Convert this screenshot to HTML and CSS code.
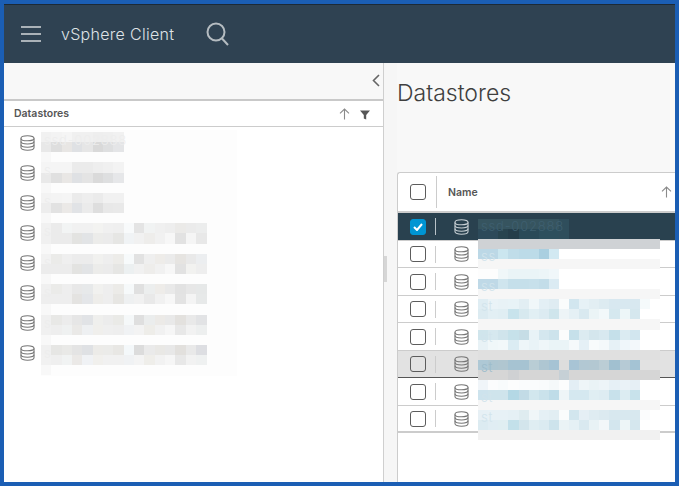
FILE: index.html
```html
<!DOCTYPE html>
<html lang="en">
<head>
  <meta charset="UTF-8" />
  <title>vSphere Client - Datastores</title>
  <link rel="stylesheet" href="styles.css">
</head>
<body>
  <svg class="defs" width="0" height="0">
    <symbol id="db" viewBox="0 0 15 16">
      <path d="M1 3.2C1 1.8 3.8.8 7.5.8S14 1.8 14 3.2v9.6c0 1.4-2.8 2.4-6.5 2.4S1 14.2 1 12.8z" />
      <path d="M1 3.4c0 1.4 2.8 2.4 6.5 2.4S14 4.8 14 3.4" />
      <path d="M1 6.6C1 8 3.8 9 7.5 9S14 8 14 6.6" />
      <path d="M1 9.8c0 1.4 2.8 2.4 6.5 2.4s6.5-1 6.5-2.4" />
    </symbol>
    <symbol id="up" viewBox="0 0 11 12">
      <path d="M5.5 11.5V1M1 5.3 5.5 1 10 5.3" />
    </symbol>
  </svg>

  <div class="app">
    <header class="topbar">
      <span class="burger"><i></i><i></i><i></i></span>
      <span class="brand">vSphere Client</span>
      <svg class="search" width="24" height="25" viewBox="0 0 24 25">
        <circle cx="10" cy="10" r="8.5" />
        <path d="M16 16.5 22 23" />
      </svg>
    </header>

    <div class="workspace">
      <aside class="tree-panel">
        <div class="tree-toolbar">
          <svg class="collapse" width="8" height="13" viewBox="0 0 8 13"><path d="M7 1 1.5 6.5 7 12" /></svg>
        </div>
        <div class="tree-head">
          <span class="head-label">Datastores</span>
          <svg class="sort-icon tree-sort"><use href="#up" /></svg>
          <svg class="filter" width="10" height="10" viewBox="0 0 10 10"><path d="M0 .5h10L6.2 5v4.5l-2.4-1V5z" /></svg>
        </div>
        <ul class="tree-list">
          <li><svg class="db"><use href="#db" /></svg></li>
          <li><svg class="db"><use href="#db" /></svg></li>
          <li><svg class="db"><use href="#db" /></svg></li>
          <li><svg class="db"><use href="#db" /></svg></li>
          <li><svg class="db"><use href="#db" /></svg></li>
          <li><svg class="db"><use href="#db" /></svg></li>
          <li><svg class="db"><use href="#db" /></svg></li>
          <li><svg class="db"><use href="#db" /></svg></li>
        </ul>
        <!-- blurred datastore names -->
        <div class="mosaic tree-mosaic">
          <div class="l1a">ssd-002888</div><div class="l1b"></div><div class="lgap"></div>
          <div class="l2a">s</div><div class="l2b"></div><div class="lgap"></div>
          <div class="l3a">s</div><div class="l3b"></div><div class="lgap"></div>
          <div class="l4a">s</div><div class="l4b"></div><div class="lgap"></div>
          <div class="l5a">s</div><div class="l5b"></div><div class="lgap"></div>
          <div class="l6a">s</div><div class="l6b"></div><div class="lgap"></div>
          <div class="l7a">s</div><div class="l7b"></div><div class="lgap"></div>
          <div class="l8a">s</div><div class="l8b"></div><div class="lgap"></div>
        </div>
      </aside>

      <div class="splitter"><span class="grip"></span></div>

      <main class="content">
        <h1>Datastores</h1>
        <section class="grid">
          <div class="grid-head">
            <span class="check-cell"><span class="check"></span></span>
            <span class="head-label name-label">Name</span>
            <svg class="sort-icon grid-sort"><use href="#up" /></svg>
          </div>
          <div class="row selected">
            <span class="check on"><svg width="10" height="8" viewBox="0 0 10 8"><path d="M1 4l3 3 5-6" /></svg></span>
            <span class="sep"></span>
            <svg class="db"><use href="#db" /></svg>
          </div>
          <div class="row"><span class="check"></span><span class="sep"></span><svg class="db"><use href="#db" /></svg></div>
          <div class="row"><span class="check"></span><span class="sep"></span><svg class="db"><use href="#db" /></svg></div>
          <div class="row"><span class="check"></span><span class="sep"></span><svg class="db"><use href="#db" /></svg></div>
          <div class="row"><span class="check"></span><span class="sep"></span><svg class="db"><use href="#db" /></svg></div>
          <div class="row hovered"><span class="check"></span><span class="sep"></span><svg class="db"><use href="#db" /></svg></div>
          <div class="row"><span class="check"></span><span class="sep"></span><svg class="db"><use href="#db" /></svg></div>
          <div class="row last"><span class="check"></span><span class="sep"></span><svg class="db"><use href="#db" /></svg></div>

          <!-- blurred datastore names -->
          <div class="mosaic grid-mosaic">
            <div class="r0 ghost-dark">ssd-002888</div><div class="r1"></div><div class="rbar"></div>
            <div class="r3">ss</div><div class="rpale"></div>
            <div class="r5"></div><div class="r6">ss</div><div class="rpale"></div>
            <div class="r8">st</div><div class="r9"></div><div class="rpale"></div>
            <div class="r11">st</div><div class="r12"></div><div class="rhov"></div>
            <div class="r14 ghost-hover">st</div><div class="r15"></div>
            <div class="r16"></div><div class="r17">st</div><div class="rpale"></div>
            <div class="r19">st</div><div class="r20"></div><div class="rend"></div>
          </div>
        </section>
      </main>
    </div>
  </div>
</body>
</html>
```

FILE: styles.css
```css
* {
  box-sizing: border-box;
  margin: 0;
  padding: 0;
}

body {
  height: 486px;
  overflow: hidden;
  background: #1b5eb4;
  padding: 4px;
  font-family: 'Inter', 'Liberation Sans', sans-serif;
}

.defs {
  position: absolute;
}

.app {
  height: 478px;
  display: flex;
  flex-direction: column;
  background: #f8f8f8;
}

/* top bar */
.topbar {
  height: 59px;
  flex: none;
  display: flex;
  align-items: center;
  background: #2f4252;
  border-top: 1px solid #1d2a36;
  padding-left: 17px;
}

.burger {
  width: 20px;
  display: flex;
  flex-direction: column;
  gap: 5px;
}

.burger i {
  height: 2px;
  background: #aab2b8;
}

.brand {
  margin-left: 20px;
  color: #dfe3e6;
  font-size: 16px;
  font-weight: 300;
  letter-spacing: 0.3px;
}

.search {
  margin-left: 32px;
  fill: none;
  stroke: #b5bcc1;
  stroke-width: 2;
}

/* layout */
.workspace {
  flex: 1;
  display: flex;
  min-height: 0;
}

.tree-panel {
  position: relative;
  width: 380px;
  flex: none;
  display: flex;
  flex-direction: column;
  background: #fff;
  border-right: 1px solid #cfcfcf;
}

.tree-toolbar {
  height: 38px;
  flex: none;
  display: flex;
  align-items: center;
  justify-content: flex-end;
  padding: 0 3px 1px 0;
  background: #f8f8f8;
  border-bottom: 2px solid #c9c9c9;
}

.collapse {
  fill: none;
  stroke: #666;
  stroke-width: 1.6;
}

.tree-head {
  height: 26px;
  flex: none;
  display: flex;
  align-items: center;
  padding-left: 10px;
  border-bottom: 1px solid #cccccc;
}

.head-label {
  font-size: 10.5px;
  font-weight: 600;
  color: #565656;
}

.sort-icon {
  width: 11px;
  height: 12px;
  fill: none;
  stroke: #8a8a8a;
  stroke-width: 1.1;
}

.tree-sort {
  margin-left: auto;
}

.filter {
  margin: 2px 13px 0 10px;
  fill: #565656;
}

.tree-list {
  list-style: none;
  padding-top: 1px;
}

.tree-list li {
  height: 30px;
  display: flex;
  align-items: center;
  padding-left: 16px;
}

.db {
  width: 15px;
  height: 16px;
  flex: none;
  fill: none;
  stroke: #777;
  stroke-width: 1.1;
}

.splitter {
  width: 13px;
  flex: none;
  display: flex;
  align-items: center;
  background: #f6f6f6;
  padding-bottom: 8px;
}

.grip {
  width: 3px;
  height: 26px;
  background: #d6d6d6;
}

/* datastores page */
.content {
  flex: 1;
  min-width: 0;
  display: flex;
  flex-direction: column;
  background: #f8f8f8;
}

h1 {
  height: 109px;
  flex: none;
  padding-top: 15px;
  font-size: 23px;
  font-weight: 300;
  line-height: 30px;
  color: #3f3f3f;
}

.grid {
  position: relative;
  flex: 1;
  background: #fff;
  border: 1px solid #cccccc;
  border-width: 1px 0 0 1px;
  border-top-left-radius: 3px;
}

.grid-head {
  height: 40px;
  display: flex;
  align-items: center;
  border-bottom: 2px solid #cccccc;
}

.check-cell {
  width: 39px;
  height: 32px;
  flex: none;
  display: flex;
  align-items: center;
  padding-left: 12px;
  border-right: 1px solid #cccccc;
}

.check {
  width: 16px;
  height: 16px;
  flex: none;
  display: flex;
  align-items: center;
  justify-content: center;
  background: #fff;
  border: 1.5px solid #5c5c5c;
  border-radius: 3px;
}

.check.on {
  background: #0095d3;
  border-color: #0095d3;
}

.check svg {
  fill: none;
  stroke: #fff;
  stroke-width: 2;
}

.name-label {
  margin-left: 11px;
}

.grid-sort {
  margin-left: auto;
  margin-right: 3px;
}

.row {
  height: 27.5px;
  display: flex;
  align-items: center;
  padding: 1px 0 0 12px;
  border-bottom: 1px solid #cccccc;
}

.row.selected {
  background: #29414f;
}

.row.selected .db {
  stroke: #c8d0d5;
}

.row.selected .sep {
  background: #b8c2c8;
}

.row.hovered {
  background: #e2e2e2;
  border-bottom-color: #565656;
}

.row.hovered .check {
  background: transparent;
}

.row.last {
  border-bottom: 2px solid #cccccc;
}

.sep {
  width: 1px;
  height: 17px;
  margin: 0 18px 0 9px;
  background: #cccccc;
}

/* mosaic over the names */
.mosaic {
  position: absolute;
  font-size: 13px;
  font-weight: 300;
  letter-spacing: 0.8px;
}

.mosaic div {
  overflow: visible;
  padding-left: 3px;
}

.tree-mosaic {
  left: 37px;
  top: 67px;
  width: 196px;
  height: 246px;
  padding-top: 2px;
  background: #fdfdfd;
  color: #ededed;
}

.tree-mosaic div {
  height: 10.15px;
  line-height: 17px;
  background-repeat: no-repeat;
}

.lgap { background: linear-gradient(90deg, #f8f8f8 10px, transparent 0); }
.l1a { background-image: linear-gradient(90deg, #f1f1f1 10px, #f3f3f3 0 21px, #f5f5f5 0 31px, #f0f0f0 0 52px, #eeeeee 0 62px, #efefef 0 72px, #f1f1f1 0 83px, transparent 0); }
.l1b { background-image: linear-gradient(90deg, #e8e8e8 10px, #dedede 0 21px, #e8e6e4 0 31px, #dfe1e4 0 41px, #e6e6e6 0 52px, #d9d9d9 0 62px, #dedfe0 0 72px, #e4e5e7 0 83px, transparent 0); }
.l2a { background-image: linear-gradient(90deg, #f5f5f5 31px, #ebebeb 0 52px, #eeeeee 0 62px, #f0f0f0 0 72px, #f3f3f3 0 83px, transparent 0); }
.l2b { background-image: linear-gradient(90deg, #e9e9e9 10px, #e0e0e0 0 21px, #e9e7e5 0 31px, #dfe1e4 0 41px, #e4e4e4 0 52px, #dadada 0 62px, #dedfe0 0 72px, #e6e7e9 0 83px, transparent 0); }
.l3a { background-image: linear-gradient(90deg, #f3f3f3 10px, #f4f4f4 0 21px, #f5f5f5 0 31px, #ebebeb 0 41px, #eeeeee 0 52px, #ebebeb 0 62px, #f1f1f1 0 83px, transparent 0); }
.l3b { background-image: linear-gradient(90deg, #ededed 10px, #e2e2e2 0 21px, #ebe9e7 0 31px, #e1e3e6 0 41px, #ebebeb 0 52px, #dedede 0 62px, #e8e8e8 0 72px, #e9e9e9 0 83px, transparent 0); }
.l4a { background-image: linear-gradient(90deg, #f1f1f1 10px, #ebebeb 0 21px, #f2f4f4 0 31px, #f1f1f1 0 52px, #f3f3f1 0 62px, #f0f0f0 0 72px, #efefef 0 83px, #f8fafb 0 93px, #e4e4e4 0 103px, #f1f3f3 0 114px, #f0f0f0 0 124px, #eeeeee 0 134px, #ebeae8 0 145px, #ebebeb 0 155px, #eceded 0 166px, transparent 0); }
.l4b { background-image: linear-gradient(90deg, #f0f0f0 10px, #ebebeb 0 31px, #e3e3e1 0 41px, #e2e4e6 0 52px, #ececea 0 62px, #ebebeb 0 72px, #e6e6e4 0 83px, #f0f3f5 0 93px, #f1f1f1 0 103px, #eeedeb 0 114px, #f1f1f1 0 124px, #f7f7f7 0 134px, #e2e2e2 0 145px, #f5f5f5 0 155px, #e8e8e8 0 166px, transparent 0); }
.l5a { background-image: linear-gradient(90deg, #f2f2f2 10px, #ebebe9 0 21px, #efefef 0 31px, #ececec 0 52px, #f1f1ef 0 62px, #eeeeee 0 72px, #edece9 0 83px, #f7fafb 0 93px, #e2e2e2 0 103px, #efefef 0 114px, #eeece9 0 124px, #ebebeb 0 134px, #e6e4e1 0 145px, #e9e9e9 0 155px, #eceef0 0 166px, transparent 0); }
.l5b { background-image: linear-gradient(90deg, #ececec 31px, #e3e3e1 0 41px, #e2e4e6 0 52px, #ececea 0 62px, #ebebeb 0 72px, #e6e6e4 0 83px, #ecf0f1 0 93px, #f1f1f1 0 103px, #eeedeb 0 114px, #f1f1f1 0 124px, #f7f7f7 0 134px, #e2e2e2 0 145px, #f2f2f0 0 155px, #eeeeee 0 166px, transparent 0); }
.l6a { background-image: linear-gradient(90deg, #f0f0f0 10px, #ebebe9 0 21px, #eeeeee 0 31px, #e8e8e8 0 41px, #e7e9ea 0 52px, #f1f1ef 0 62px, #eeeeee 0 72px, #ecebe8 0 83px, #f6f9fa 0 93px, #e0e0e0 0 103px, #eceeee 0 114px, #eeece9 0 124px, #e9e9e9 0 134px, #e2e2e2 0 145px, #e7e7e7 0 155px, #e6e8e8 0 166px, transparent 0); }
.l6b { background-image: linear-gradient(90deg, #eeeeee 31px, #e4e3e1 0 41px, #e4e6e9 0 52px, #eeedea 0 62px, #eeeeee 0 72px, #e7e6e3 0 83px, #eef0f1 0 93px, #f1f1f1 0 103px, #e9e9e9 0 114px, #f1f1f1 0 124px, #f7f7f7 0 134px, #e3e3e3 0 145px, #f4f4f4 0 155px, #e7e9e9 0 166px, transparent 0); }
.l7a { background-image: linear-gradient(90deg, #f0f0f0 10px, #e8e8e6 0 21px, #ececec 0 31px, #e6e6e6 0 41px, #e1e3e6 0 52px, #efefed 0 62px, #ececec 0 72px, #eaeae7 0 83px, #f5f8f9 0 93px, #dfdfdf 0 103px, #ebeded 0 114px, #eceae7 0 124px, #e9e9e9 0 134px, #e3e1de 0 145px, #e9e9e9 0 155px, #e2e3e5 0 166px, transparent 0); }
.l7b { background-image: linear-gradient(90deg, #f0f0f0 10px, #eeeeee 0 21px, #eff1f1 0 31px, #eae9e7 0 41px, #eef0f2 0 52px, #f0efec 0 62px, #efefef 0 72px, #eeeeee 0 83px, #f0f2f4 0 93px, #f3f3f3 0 103px, #eeede9 0 114px, #f1f1f1 0 124px, #f6f6f6 0 134px, #e8e8e8 0 145px, #f2f2f2 0 155px, #edefef 0 166px, transparent 0); }
.l8a { background-image: linear-gradient(90deg, #f0f0f0 10px, #e6e6e4 0 21px, #e9e9e7 0 31px, #e4e4e4 0 41px, #dfe1e4 0 52px, #ecebe8 0 62px, #ebebe9 0 72px, #e8e7e4 0 83px, #f4f8fa 0 93px, #dcdcdc 0 103px, #eaeaea 0 114px, #e9e8e5 0 124px, #e8e8e8 0 134px, #e2e0dd 0 145px, #e9e9e9 0 155px, #dddee2 0 166px, transparent 0); }
.l8b { background-image: linear-gradient(90deg, #f1f1f1 10px, #efefef 0 21px, #f1f3f3 0 31px, #ebe9e7 0 41px, #f0f2f5 0 52px, #f1f0ed 0 62px, #f1f1f1 0 83px, #f0f2f4 0 93px, #f4f4f4 0 103px, #efeeea 0 114px, #f2f2f2 0 124px, #f6f6f6 0 134px, #e8e8e8 0 145px, #f2f2f2 0 155px, #eff1f1 0 166px, transparent 0); }

.grid-mosaic {
  left: 80px;
  top: 46px;
  width: 182px;
  color: #d2e4ec;
}

.grid-mosaic div {
  height: 10.05px;
  line-height: 15px;
}

.grid-mosaic .ghost-dark { color: #3e5f6f; }
.grid-mosaic .ghost-hover { color: #9dbccb; }
.rbar { background: #cfd2d5; }
.rpale { background: #f6f6f6; }
.rhov { background: #e0e0e0; }
.rend { background: #f1f1f1; }
.r0 { background: linear-gradient(90deg, #36545f 81px, #2f4e5c 0 91px, transparent 0); }
.r1 { background: linear-gradient(90deg, #2d4a5a 20px, #28444f 0 30px, #253e4a 0 41px, #2a4a58 0 61px, #2d4f5d 0 81px, #2f4e5c 0 91px, transparent 0); }
.r3 { background: linear-gradient(90deg, #bcd8e6 20px, #cbe6ef 0 30px, #c0dde9 0 41px, #bcdbe8 0 61px, #aacfe0 0 71px, #d2e9f2 0 81px, #fff 0); }
.r5 { background: linear-gradient(90deg, #fdfdfd 20px, #f0f7f9 0 30px, #eaf4f7 0 61px, #ecf5f8 0 71px, #f0f7fa 0 81px, #fff 0); }
.r6 { background: linear-gradient(90deg, #bfd9e7 20px, #cfe5ee 0 30px, #c5dfea 0 51px, #c7e0eb 0 61px, #c3dde9 0 71px, #dbebf3 0 81px, #fff 0); }
.r8 { background: linear-gradient(90deg, #dfedf3 10px, #eaf3f7 0 20px, #e8f2f6 0 30px, #e8f3f7 0 41px, #e2eef3 0 51px, #f0f7f9 0 61px, #e3eff5 0 71px, #dfecf2 0 81px, #fafcfc 0 91px, #d2e6ef 0 101px, #e6f1f6 0 111px, #e2eef3 0 121px, #ddebf1 0 131px, #d8e8f0 0 162px, #f5fafb 0 172px, #fff 0); }
.r9 { background: linear-gradient(90deg, #dcebf1 10px, #e2eff4 0 20px, #e0eef3 0 30px, #c8e3ec 0 41px, #d7e9ef 0 51px, #e1eff4 0 61px, #dcebf2 0 71px, #cfe5ec 0 81px, #edf4f7 0 91px, #e5f0f5 0 101px, #d9e9f0 0 111px, #ebf4f6 0 121px, #f2f8fa 0 131px, #d5e8ef 0 142px, #edf6f8 0 152px, #d5e7ee 0 162px, #fff 0); }
.r11 { background: linear-gradient(90deg, #d0e5ec 10px, #d6e8ef 0 20px, #d0e4ec 0 30px, #c6e1ea 0 41px, #c6dde6 0 51px, #e8f3f7 0 61px, #d4e7ef 0 71px, #cde3ec 0 81px, #fbfcfc 0 91px, #c6e0ea 0 101px, #dcebf1 0 111px, #d4e6ed 0 121px, #d8e9f0 0 131px, #c5e0ea 0 142px, #dbebf2 0 152px, #d2e6ef 0 162px, #fff 0); }
.r12 { background: linear-gradient(90deg, #e8f2f6 10px, #f0f7f9 0 20px, #f2f8fa 0 30px, #dbecf3 0 41px, #eef6f9 0 51px, #e9f3f7 0 61px, #eff6f9 0 71px, #eaf4f7 0 91px, #f5f9fb 0 101px, #e5f0f6 0 111px, #f8fbfc 0 121px, #f4f9fb 0 131px, #e6f1f6 0 142px, #eff6fa 0 152px, #f3f8fb 0 162px, #fff 0); }
.r14 { background: linear-gradient(90deg, #aec8d5 10px, #aec6d1 0 20px, #b0c6d0 0 30px, #a6c3d2 0 51px, #b9cdd5 0 61px, #aec6d2 0 71px, #a6c3d4 0 81px, #dddddd 0 91px, #a8c4d5 0 101px, #b2c8d3 0 111px, #b3c8d2 0 121px, #bbcdd5 0 131px, #a1c0d0 0 142px, #b6cad5 0 152px, #a4c3d4 0 162px, #e2e2e2 0); }
.r15 { background: linear-gradient(90deg, #d6d6d6 30px, #cfd1d3 0 41px, #d6d6d6 0 81px, #c6d0d6 0 91px, #d6d6d6 0); }
.r16 { background: linear-gradient(90deg, #f0f5f9 10px, #fbfcfd 0 20px, #f8fbfc 0 30px, #fcfdfd 0 41px, #fafcfd 0 61px, #f9fbfc 0 71px, #f5f9fa 0 81px, #fcfdfd 0 91px, #e3eef5 0 101px, #eef5f8 0 111px, #eaf3f6 0 121px, #edf4f8 0 131px, #e6f0f6 0 142px, #eaf2f7 0 152px, #e6eff5 0 162px, #fff 0); }
.r17 { background: linear-gradient(90deg, #cde3ed 10px, #cfe4ec 0 30px, #b4d8e5 0 41px, #c2dbe6 0 51px, #d2e7ee 0 61px, #cae2eb 0 71px, #bfdce8 0 81px, #eef5f7 0 91px, #d5e8f0 0 111px, #e0eef3 0 121px, #deecf2 0 131px, #c8e1eb 0 142px, #dcecf2 0 152px, #c8e2eb 0 162px, #fff 0); }
.r19 { background: linear-gradient(90deg, #e7f0f5 10px, #e7f1f6 0 30px, #e5f0f5 0 41px, #dfecf0 0 51px, #f0f6f8 0 61px, #e5f0f5 0 71px, #e2eef3 0 81px, #fafcfc 0 91px, #d2e6ee 0 101px, #e5eff5 0 111px, #dfecf2 0 121px, #dceaf0 0 131px, #d8e8ef 0 162px, #fbfcfd 0 172px, #fff 0); }
.r20 { background: linear-gradient(90deg, #dcebf1 10px, #e0edf3 0 20px, #e0eef2 0 30px, #c3e0ea 0 41px, #d3e5ec 0 51px, #dfedf2 0 61px, #dbebf1 0 71px, #cde3ec 0 81px, #eaf3f6 0 91px, #e5f0f5 0 101px, #d9e9f0 0 111px, #e8f2f5 0 121px, #f2f7f9 0 131px, #d3e6ee 0 142px, #edf5f7 0 152px, #d5e7ee 0 162px, #fff 0); }
```
